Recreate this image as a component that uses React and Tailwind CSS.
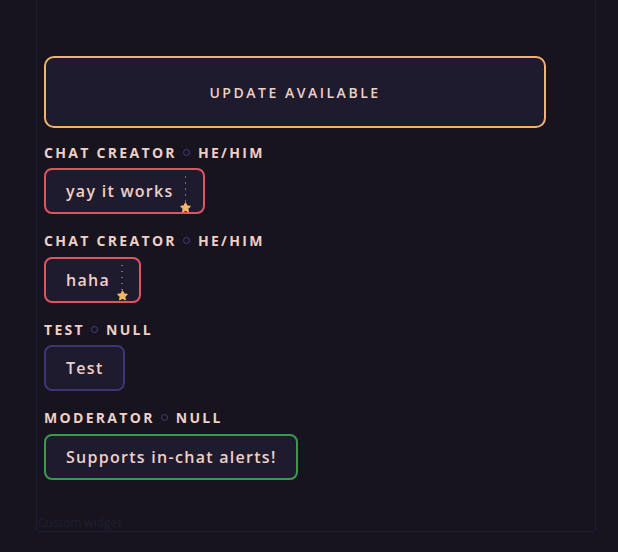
import React from "react";

const font = { fontFamily: "'Open Sans', 'Noto Sans', sans-serif" };

function Indicator() {
  return (
    <div className="absolute right-[11px] top-[5px] bottom-[5px] w-[12px] flex flex-col items-center justify-between">
      <div className="flex flex-col items-center gap-[4.5px] pt-[1px]">
        {[0, 1, 2, 3, 4].map((i) => (
          <span key={i} className="block w-[1.5px] h-[1.5px] rounded-full bg-[#8a7a80]" />
        ))}
      </div>
      <svg width="11" height="11" viewBox="0 0 24 24" className="block shrink-0">
        <path
          d="M12 2l3.1 6.4 7 1-5.1 4.9 1.2 7L12 18l-6.2 3.3 1.2-7-5.1-4.9 7-1z"
          fill="#f6b868"
          stroke="#f6b868"
          strokeWidth="2.5"
          strokeLinejoin="round"
        />
      </svg>
    </div>
  );
}

function Item({ role, pronouns, text, border, indicator }) {
  return (
    <div className="flex flex-col items-start">
      <div className="flex items-center h-[20px] text-[14px] font-bold tracking-[0.165em] text-[#f0cfc6] uppercase">
        <span>{role}</span>
        <span className="ml-[6px] mr-[8px] w-[7px] h-[7px] rounded-full border-[1.5px] border-[#463d8c]" />
        <span>{pronouns}</span>
      </div>
      <div
        className={`relative mt-[6px] h-[46px] flex items-center rounded-[8px] border-2 bg-[#1e1b2e] pl-[20px] ${border} ${indicator ? "pr-[29px]" : "pr-[19px]"}`}
      >
        <span className="text-[16px] font-semibold tracking-[0.08em] text-[#f0cfc6]">{text}</span>
        {indicator && <Indicator />}
      </div>
    </div>
  );
}

export default function App() {
  return (
    <div className="w-[618px] h-[552px] bg-[#17141f] overflow-hidden" style={font}>
      <div className="ml-[36px] w-[560px] h-[532px] border-x border-b border-[#1a1f3e] rounded-b-[4px] flex flex-col">
        <div className="pl-[7px] pt-[56px] flex flex-col">
          <div className="w-[502px] h-[72px] rounded-[10px] border-2 border-[#f2b268] bg-[#1e1b2e] flex items-center justify-center">
            <span className="text-[14px] font-semibold tracking-[0.18em] text-[#f0cfc6]">UPDATE AVAILABLE</span>
          </div>
          <div className="mt-[14px] flex flex-col gap-[16.5px]">
            <Item role="Chat Creator" pronouns="he/him" text="yay it works" border="border-[#e05360]" indicator />
            <Item role="Chat Creator" pronouns="he/him" text="haha" border="border-[#e05360]" indicator />
            <Item role="Test" pronouns="null" text="Test" border="border-[#3d3673]" />
            <Item role="Moderator" pronouns="null" text="Supports in-chat alerts!" border="border-[#3a9a4c]" />
          </div>
        </div>
        <div className="mt-auto mb-[1px] pl-[1px] text-[12px] text-[#211e30] leading-[14px]">Custom widget</div>
      </div>
    </div>
  );
}
